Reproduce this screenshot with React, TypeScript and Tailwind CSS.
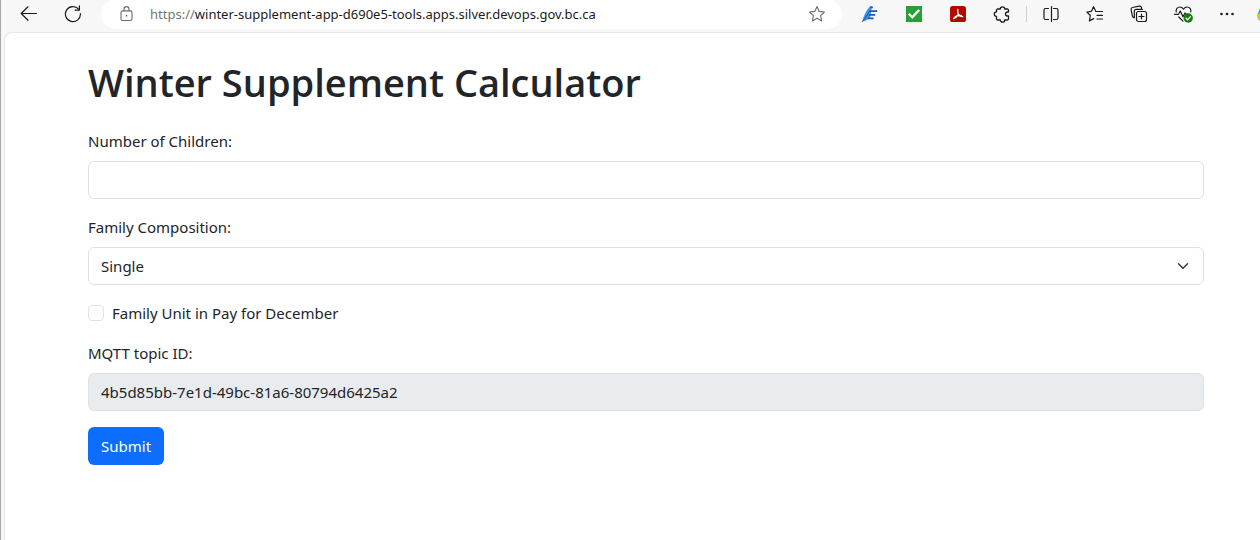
import { useState, type ReactNode } from "react";

function ToolButton({ label, children }: { label: string; children: ReactNode }) {
  return (
    <button type="button" aria-label={label} className="flex h-[30px] w-11 shrink-0 items-center justify-center text-[#1b1b1b]">
      {children}
    </button>
  );
}

const stroke = {
  fill: "none",
  stroke: "currentColor",
  strokeLinecap: "round" as const,
  strokeLinejoin: "round" as const,
};

function BackIcon() {
  return (
    <svg width="18" height="16" viewBox="0 0 18 16" {...stroke} strokeWidth="1.2">
      <path d="M16.5 7.5H1.2M8 .8 1.2 7.5 8 14.2" />
    </svg>
  );
}

function ReloadIcon() {
  return (
    <svg width="18" height="18" viewBox="0 0 18 18" {...stroke} strokeWidth="1.2">
      <path d="M16.4 8.6A7.5 7.5 0 1 1 14.6 4.2" />
      <path d="M15.4 .9v4.3h-4.3" />
    </svg>
  );
}

function LockIcon() {
  return (
    <svg width="14" height="16" viewBox="0 0 14 16" {...stroke} strokeWidth="1.1">
      <rect x="1" y="4.9" width="11" height="9.6" rx="1.6" />
      <path d="M4 4.8V3.1a2.5 2.5 0 0 1 5 0v1.7" />
      <circle cx="6.5" cy="9.7" r=".9" fill="currentColor" stroke="none" />
    </svg>
  );
}

function StarIcon() {
  return (
    <svg width="18" height="18" viewBox="0 0 18 18" {...stroke} strokeWidth="1.1">
      <path d="M9 1.6l2.2 4.8 5.2.6-3.8 3.6 1 5.3L9 13.3l-4.6 2.6 1-5.3L1.6 7l5.2-.6z" />
    </svg>
  );
}

function FeatherIcon() {
  return (
    <svg width="18" height="18" viewBox="0 0 18 18">
      <path d="M1.2 16.8C2.6 11 5.5 4.5 9.5 1.3h1.5L9.2 12.5 5 15.5z" fill="#3d93ea" />
      <path d="M1.2 16.8C4 13.5 6.5 10 9 5.5" stroke="#1d4f9f" strokeWidth="1" fill="none" />
      <path d="M9.3 2.4h2.6M9 6.2h7.2M8 9.8h6.2M6.6 13.4h6" stroke="#2156b3" strokeWidth="1.8" fill="none" />
    </svg>
  );
}

function CheckSquareIcon() {
  return (
    <svg width="16" height="16" viewBox="0 0 16 16">
      <path d="M0 0h16v16H0z" fill="#29a036" />
      <path d="M2.8 7.8 6.3 11.4 13.2 4" stroke="#fff" strokeWidth="2.3" fill="none" />
    </svg>
  );
}

function PdfIcon() {
  return (
    <svg width="16" height="16" viewBox="0 0 16 16">
      <rect width="16" height="16" rx="2.6" fill="#b30b00" />
      <path
        d="M7.8 3.5c-.2 2 .1 3.6.6 4.9M8.4 8.4C7.3 10.2 5.5 12 3.6 12.5M8.4 8.4c1.1 1.5 2.6 2.3 4.3 2.3M5.2 10.6c2-1 4-1.3 6.3-1"
        stroke="#fff"
        strokeWidth="1.3"
        strokeLinecap="round"
        fill="none"
      />
    </svg>
  );
}

function PuzzleIcon() {
  return (
    <svg width="18" height="18" viewBox="0 0 18 18" {...stroke} strokeWidth="1.3">
      <path d="M4.7 4h2.6a2.2 2.2 0 0 1 4.4 0h2.6a1.2 1.2 0 0 1 1.2 1.2V7h-1a2 2 0 0 0 0 4h1v2.8a1.2 1.2 0 0 1-1.2 1.2h-2.6a2.2 2.2 0 0 1-4.4 0H4.7a1.2 1.2 0 0 1-1.2-1.2V11.3a2.2 2.2 0 0 1 0-4.4V5.2A1.2 1.2 0 0 1 4.7 4z" />
    </svg>
  );
}

function SplitIcon() {
  return (
    <svg width="18" height="18" viewBox="0 0 18 18" {...stroke} strokeWidth="1.2">
      <path d="M6.5 3.5H3.5A1.5 1.5 0 0 0 2 5v8a1.5 1.5 0 0 0 1.5 1.5h3M11.500 3.500h3A1.500 1.500 0 0 1 16 5v8a1.500 1.500 0 0 1-1.500 1.500h-3M9.500 1.500v15" />
    </svg>
  );
}

function FavoritesIcon() {
  return (
    <svg width="18" height="18" viewBox="0 0 18 18" {...stroke} strokeWidth="1.2">
      <path d="M16.5 6.5H9.9L7.5 1.7 5.4 6.3.9 7l3.4 3.5-.9 5.4 4.3-2.3M11 10.3h5.5M11 14h5.5" />
    </svg>
  );
}

function CollectionsIcon() {
  return (
    <svg width="18" height="18" viewBox="0 0 18 18" {...stroke} strokeWidth="1.2">
      <rect x="6.5" y="6.5" width="10" height="10" rx="2" />
      <path d="M11.5 9v5M9 11.5h5M4.3 12.8 3.4 12.4a2 2 0 0 1-1-1.3L1.1 4.6a1.8 1.8 0 0 1 1.4-2.1l6.7-1.3a2 2 0 0 1 2.3 1.4l.3 1.6M4.3 12.8V6.4a2 2 0 0 1 2-2h6" />
    </svg>
  );
}

function HealthIcon() {
  return (
    <svg width="20" height="18" viewBox="0 0 20 18" {...stroke} strokeWidth="1.2">
      <path d="M3.3 7C2.5 4.5 4.2 2 6.8 2 8.5 2 9.8 3 10.5 4.2 11.2 3 12.5 2 14.2 2c2.6 0 4.3 2.5 3.5 5M1.5 9.3h4L7.3 6l2.7 5.8 2-3.8.9 1.3h2M5.8 12l4.2 4.2" />
      <circle cx="15.2" cy="13" r="4.7" fill="#107c10" stroke="none" />
      <path d="m13 13.2 1.5 1.5 2.9-3" stroke="#fff" strokeWidth="1.3" />
    </svg>
  );
}

function MoreIcon() {
  return (
    <svg width="16" height="16" viewBox="0 0 16 16" fill="currentColor">
      <circle cx="2.5" cy="8" r="1.3" />
      <circle cx="8" cy="8" r="1.3" />
      <circle cx="13.5" cy="8" r="1.3" />
    </svg>
  );
}

function CopilotIcon() {
  return (
    <svg width="28" height="22" viewBox="0 0 28 22">
      <path d="M7 2h11l-4 16H5c-3.5 0-5-3-4.6-6L3 5c.6-2 2-3 4-3z" fill="#2fa8d8" />
      <path d="M.3 11H10v7H5C1.5 18 0 15 .3 11z" fill="#c8cf3a" />
    </svg>
  );
}

function BrowserBar() {
  return (
    <header className="flex h-8 items-end overflow-hidden pb-[3px]">
      <nav aria-label="Navigation" className="flex w-[100px] shrink-0 pl-[6px]">
        <ToolButton label="Back">
          <BackIcon />
        </ToolButton>
        <ToolButton label="Refresh">
          <ReloadIcon />
        </ToolButton>
      </nav>
      <div className="flex h-[30px] min-w-0 flex-1 items-center rounded-full bg-white pl-[19px] text-[#6b6b6b]">
        <LockIcon />
        <p className="ml-4 min-w-0 flex-1 truncate text-[13px] leading-5 text-[#757575]">
          https://<span className="text-[#1b1b1b]">winter-supplement-app-d690e5-tools.apps.silver.devops.gov.bc.ca</span>
        </p>
        <button type="button" aria-label="Add to favorites" className="mr-4 shrink-0">
          <StarIcon />
        </button>
      </div>
      <div className="flex w-[418px] shrink-0 items-center overflow-hidden pl-[6px]">
        <ToolButton label="Writing assistant">
          <FeatherIcon />
        </ToolButton>
        <ToolButton label="Checker">
          <CheckSquareIcon />
        </ToolButton>
        <ToolButton label="PDF tools">
          <PdfIcon />
        </ToolButton>
        <ToolButton label="Extensions">
          <PuzzleIcon />
        </ToolButton>
        <span className="mx-[2px] h-4 w-px shrink-0 bg-[#cfcfcf]" />
        <ToolButton label="Split screen">
          <SplitIcon />
        </ToolButton>
        <ToolButton label="Favorites">
          <FavoritesIcon />
        </ToolButton>
        <ToolButton label="Collections">
          <CollectionsIcon />
        </ToolButton>
        <ToolButton label="Browser essentials">
          <HealthIcon />
        </ToolButton>
        <ToolButton label="Settings and more">
          <MoreIcon />
        </ToolButton>
        <ToolButton label="Copilot">
          <CopilotIcon />
        </ToolButton>
      </div>
    </header>
  );
}

export default function App() {
  const [children, setChildren] = useState("");
  const [family, setFamily] = useState("Single");
  const [inPay, setInPay] = useState(false);

  return (
    <div className="flex min-h-screen flex-col border-l border-[#a8a8a8] bg-[#f7f7f7] font-['Noto_Sans','Open_Sans',sans-serif]">
      <BrowserBar />
      <main className="ml-[3px] flex-1 rounded-tl-lg border-t border-l border-[#e8e8e8] bg-white pt-6 pr-14 pb-10 pl-[83px] text-[15px] leading-6 text-[#212529]">
        <h1 className="font-['Open_Sans','Noto_Sans',sans-serif] text-[38px] leading-[50px] font-semibold">
          Winter Supplement Calculator
        </h1>
        <form className="mt-[22px] flex flex-col gap-4" onSubmit={(e) => e.preventDefault()}>
          <div className="flex flex-col gap-2">
            <label htmlFor="children">Number of Children:</label>
            <input
              id="children"
              type="text"
              inputMode="numeric"
              value={children}
              onChange={(e) => setChildren(e.target.value)}
              className="h-[38px] w-full rounded-md border border-[#dee2e6] bg-white px-3"
            />
          </div>
          <div className="flex flex-col gap-2">
            <label htmlFor="family">Family Composition:</label>
            <div className="grid">
              <select
                id="family"
                value={family}
                onChange={(e) => setFamily(e.target.value)}
                className="col-start-1 row-start-1 h-[38px] w-full appearance-none rounded-md border border-[#dee2e6] bg-white px-3"
              >
                <option>Single</option>
                <option>Couple</option>
              </select>
              <svg
                viewBox="0 0 16 16"
                className="pointer-events-none col-start-1 row-start-1 mr-[13px] h-3 w-4 self-center justify-self-end"
                fill="none"
                stroke="#343a40"
                strokeWidth="2"
                strokeLinecap="round"
                strokeLinejoin="round"
              >
                <path d="m2 5 6 6 6-6" />
              </svg>
            </div>
          </div>
          <div className="flex items-center gap-2">
            <input
              id="in-pay"
              type="checkbox"
              checked={inPay}
              onChange={(e) => setInPay(e.target.checked)}
              className="size-4 appearance-none rounded-sm border border-[#dee2e6] bg-white checked:border-[#0d6efd] checked:bg-[#0d6efd]"
            />
            <label htmlFor="in-pay">Family Unit in Pay for December</label>
          </div>
          <div className="flex flex-col gap-2">
            <label htmlFor="topic">MQTT topic ID:</label>
            <input
              id="topic"
              type="text"
              readOnly
              value="4b5d85bb-7e1d-49bc-81a6-80794d6425a2"
              className="h-[38px] w-full rounded-md border border-[#dee2e6] bg-[#e9ecef] px-3"
            />
          </div>
          <button type="submit" className="h-[38px] self-start rounded-md bg-[#0d6efd] px-[13px] text-white">
            Submit
          </button>
        </form>
      </main>
    </div>
  );
}
